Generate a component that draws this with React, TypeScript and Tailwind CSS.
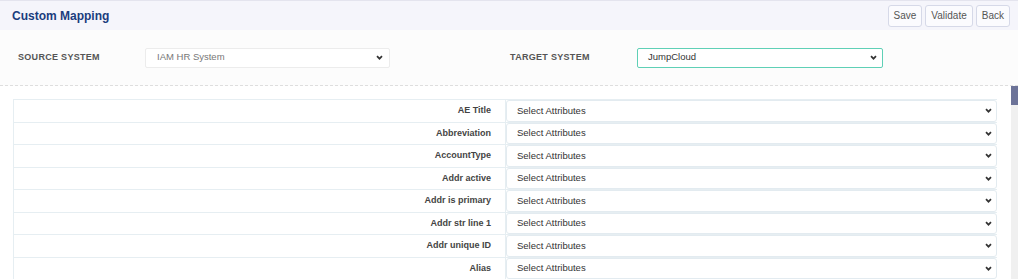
import React from 'react';

const fields = [
  'AE Title',
  'Abbreviation',
  'AccountType',
  'Addr active',
  'Addr is primary',
  'Addr str line 1',
  'Addr unique ID',
  'Alias',
];

const Chevron: React.FC = () => (
  <svg width="7" height="5" viewBox="0 0 7 5" className="shrink-0">
    <path d="M1 1.2 L3.5 3.7 L6 1.2" fill="none" stroke="#333" strokeWidth="1.7" />
  </svg>
);

const FakeSelect: React.FC<{ value: string; className?: string; textClass?: string }> = ({ value, className, textClass }) => (
  <div className={`flex items-center justify-between bg-white ${className ?? ''}`}>
    <span className={textClass}>{value}</span>
    <Chevron />
  </div>
);

const App: React.FC = () => {
  return (
    <div className="w-[1024px] h-[279px] overflow-hidden bg-white font-['Liberation_Sans',Arial,sans-serif]">
      <div className="w-[1018px] h-full flex flex-col">
        {/* Header */}
        <div className="h-[30px] shrink-0 flex items-center justify-between pl-3 pr-2 bg-[#f5f5fb] border-t border-[#e4e4ee]">
          <h1 className="text-[12px] font-bold text-[#1b3d7e]">Custom Mapping</h1>
          <div className="flex gap-[3px]">
            {['Save', 'Validate', 'Back'].map(b => (
              <button
                key={b}
                className="h-[22px] px-[5px] text-[10px] text-[#555] bg-[#fbfbfe] border border-[#d6d9e8] rounded-[3px]"
              >
                {b}
              </button>
            ))}
          </div>
        </div>

        {/* Systems */}
        <div className="h-[56px] shrink-0 grid grid-cols-[492px_1fr] items-center pl-[18px] bg-[#fcfcfc] border-b border-dashed border-[#dedede]">
          <div className="flex items-center">
            <span className="w-[127px] text-[9px] font-bold tracking-[0.3px] text-[#555]">SOURCE SYSTEM</span>
            <FakeSelect
              value="IAM HR System"
              className="w-[245px] h-[20px] pl-[11px] pr-[6px] border border-[#ececec] rounded-[2px]"
              textClass="text-[9.5px] text-[#777]"
            />
          </div>
          <div className="flex items-center">
            <span className="w-[127px] text-[9px] font-bold tracking-[0.3px] text-[#555]">TARGET SYSTEM</span>
            <FakeSelect
              value="JumpCloud"
              className="w-[246px] h-[20px] pl-[10px] pr-[5px] border border-[#5fd0b6] rounded-[2px]"
              textClass="text-[9.5px] text-[#333]"
            />
          </div>
        </div>

        {/* Mapping table with scrollbar */}
        <div className="flex-1 flex min-h-0">
          <div className="flex-1 pt-[13px] pl-[13px] pr-[14px] overflow-hidden">
            <div className="border-t border-l border-[#e6eef2]">
              {fields.map(f => (
                <div key={f} className="h-[22.5px] flex border-b border-[#e6eef2]">
                  <div className="w-[492px] shrink-0 flex items-center justify-end pr-[14px] border-r border-[#e6eef2] text-[9px] font-bold text-[#444]">
                    {f}
                  </div>
                  <FakeSelect
                    value="Select Attributes"
                    className="flex-1 pl-[10px] pr-[4px] border border-[#e3ebf0] rounded-[3px]"
                    textClass="text-[9.5px] text-[#333]"
                  />
                </div>
              ))}
            </div>
          </div>
          <div className="w-[7px] shrink-0 bg-[#f0f0f0]">
            <div className="h-[19px] bg-[#6c7398]" />
          </div>
        </div>
      </div>
    </div>
  );
};

export default App;
